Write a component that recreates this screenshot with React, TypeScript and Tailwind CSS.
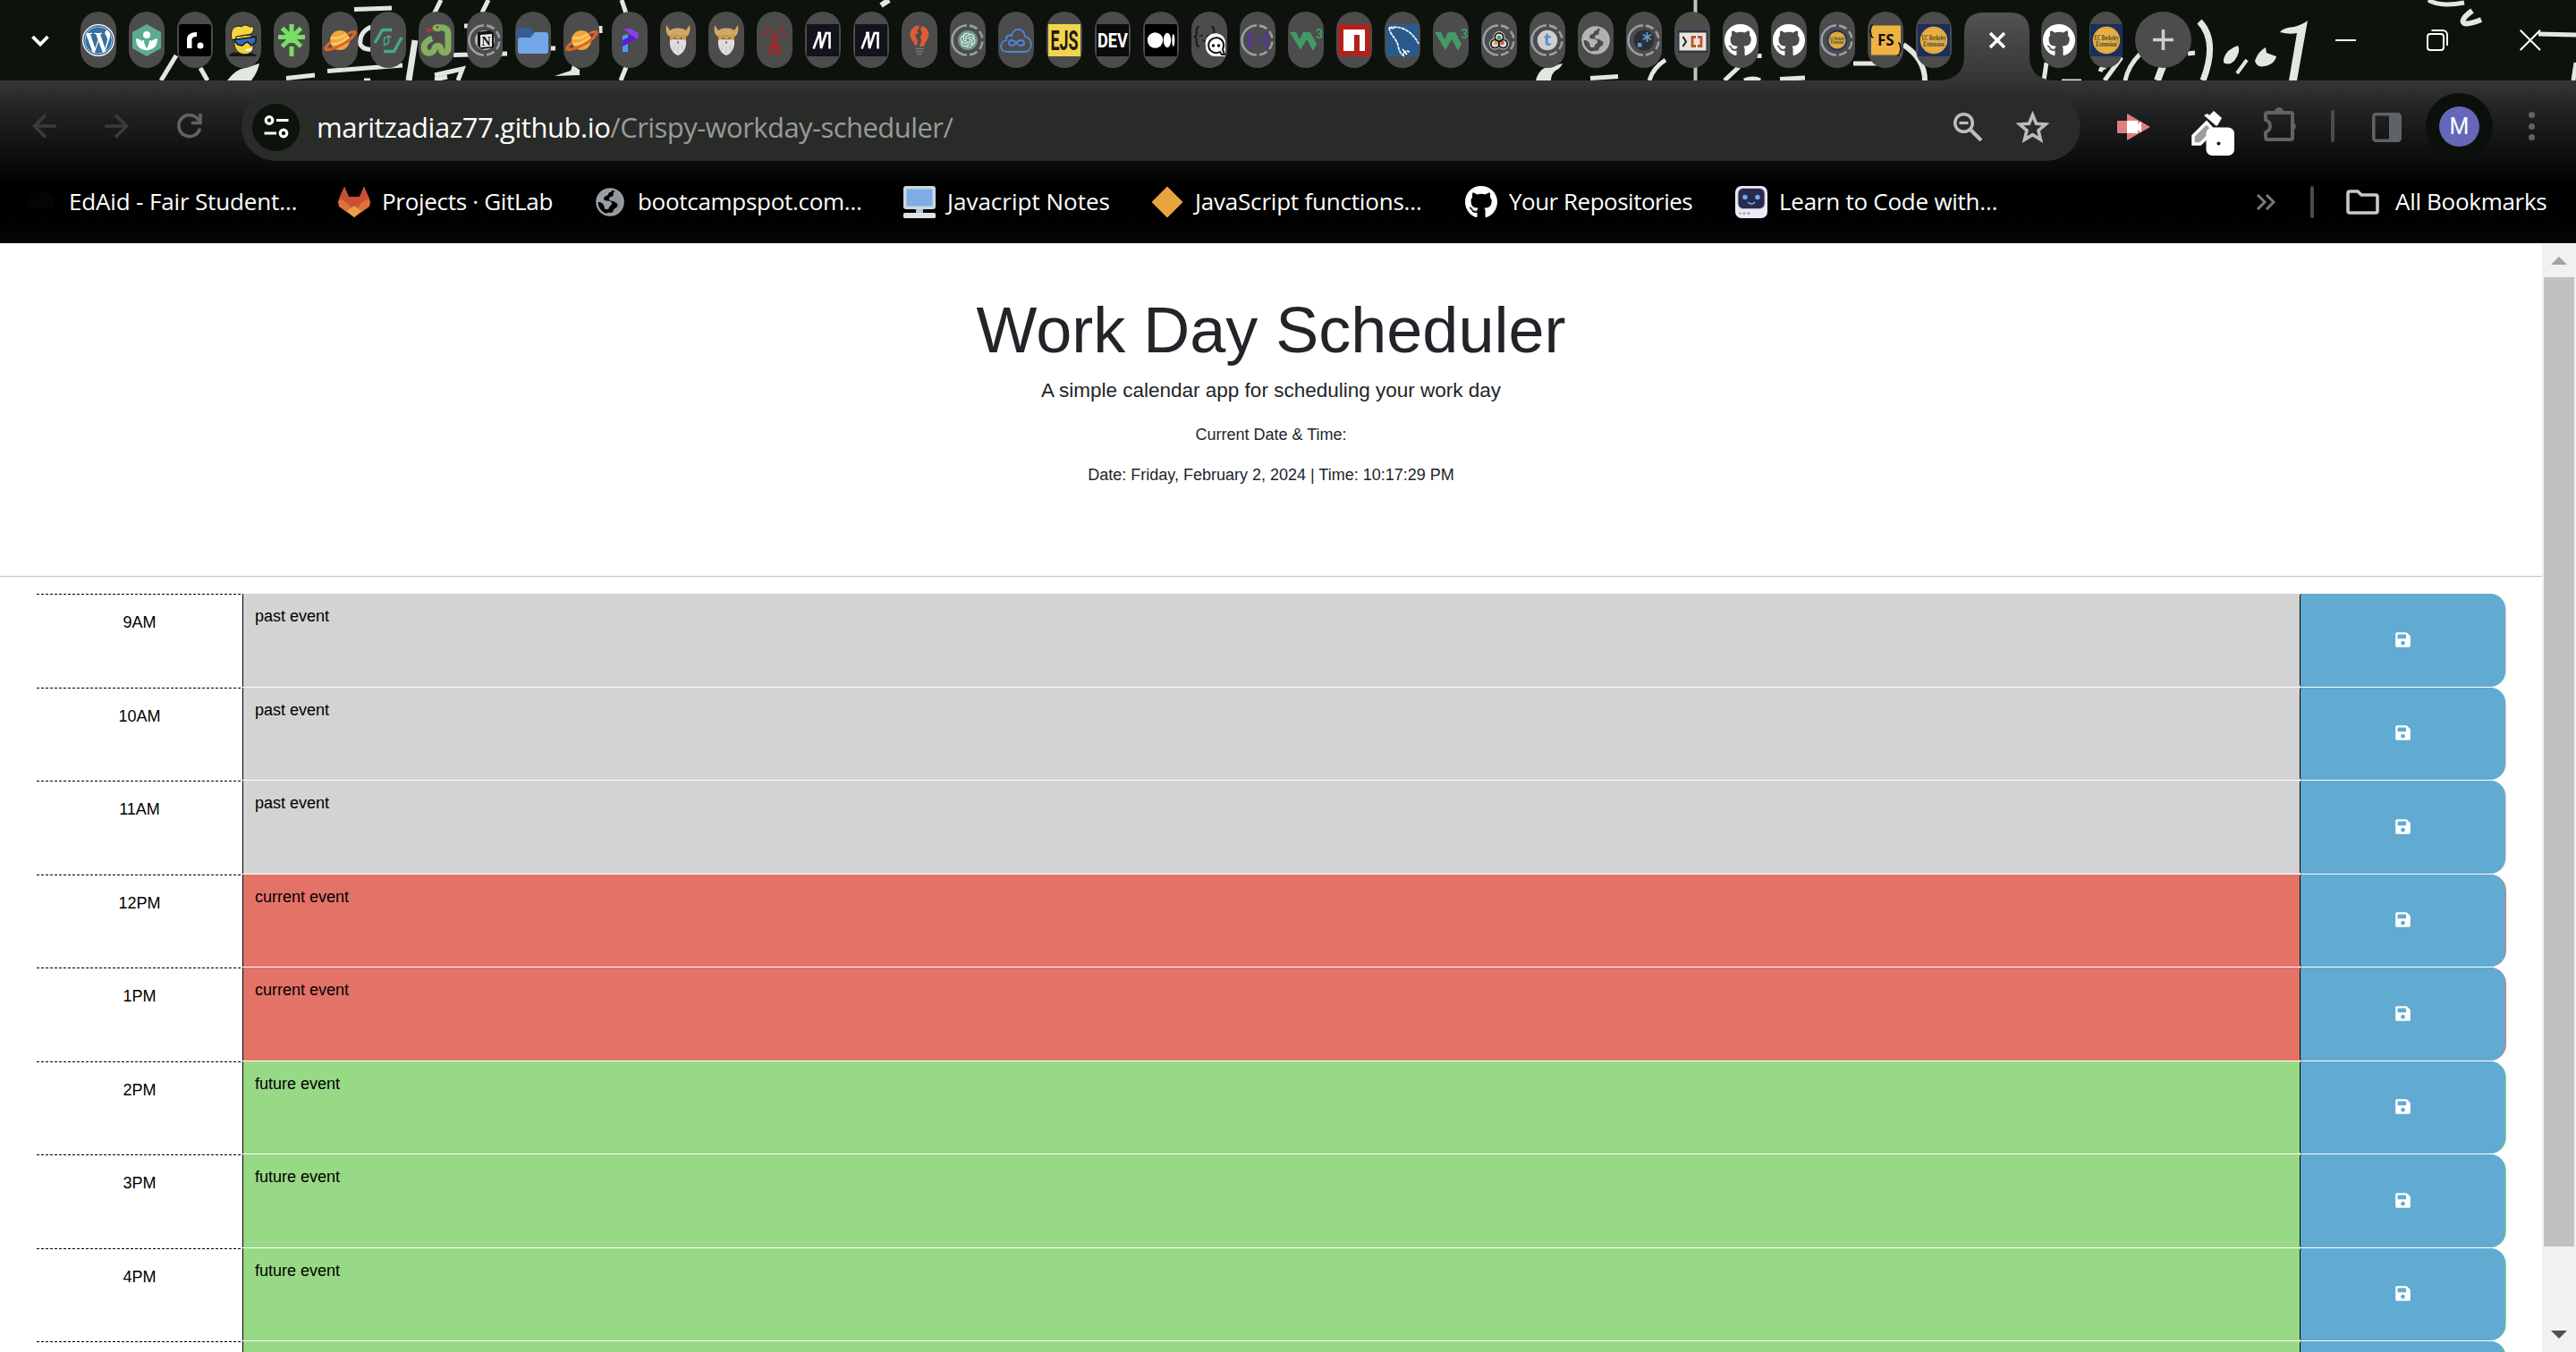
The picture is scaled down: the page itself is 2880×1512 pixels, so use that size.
import React from "react";
import { FaGithub, FaSave, FaWordpressSimple } from "react-icons/fa";
import { SiOpenai } from "react-icons/si";

const UI = "font-['Open_Sans','Noto_Sans',sans-serif]";

function Ico({ children, box = "0 0 36 36" }: { children: React.ReactNode; box?: string }) {
  return (
    <svg viewBox={box} className="block h-9 w-9 shrink-0 overflow-visible" fill="none">
      {children}
    </svg>
  );
}

/* Ring shown round the favicon of a sleeping tab */
function Sleep({ children }: { children: React.ReactNode }) {
  return (
    <Ico>
      <path d="M17 1.5A16.5 16.5 0 0 0 17 34.5" stroke="#9a9fa6" strokeWidth="2.6" />
      <path
        d="M20 1.6A16.5 16.5 0 0 1 28.5 5.3M31 8A16.5 16.5 0 0 1 34.3 15.5M34.4 19.5A16.5 16.5 0 0 1 31.2 28M28.5 30.7A16.5 16.5 0 0 1 20 34.4"
        stroke="#9a9fa6"
        strokeWidth="2.6"
      />
      {children}
    </Ico>
  );
}

const WordPress = () => (
  <Ico>
    <circle cx="18" cy="18" r="18" fill="#fff" />
    <circle cx="18" cy="18" r="16.4" fill="#37709f" />
    <FaWordpressSimple x="1" y="1" size={34} color="#fff" />
    <circle cx="18" cy="18" r="16" stroke="#37709f" strokeWidth="1.4" />
  </Ico>
);

const Hex = () => (
  <Ico>
    <path d="M18 0 34 9v18L18 36 2 27V9z" fill="#5cad90" />
    <circle cx="18" cy="12" r="4" fill="#fff" />
    <path d="M18 29c-2-7-5-12-12-13 0 8 4 13 12 13zM18 29c2-7 5-12 12-13 0 8-4 13-12 13z" fill="#fff" />
    <path d="M18 29C15 25 14 21 14 18M18 29c3-4 4-8 4-11" stroke="#fff" strokeWidth="2" />
  </Ico>
);

const Roadmap = () => (
  <Ico>
    <rect width="36" height="36" rx="3" fill="#000" />
    <path d="M9 27V17c0-5 4-8 11-8v5c-4 0-5.5 1.500-5.5 4v9z" fill="#fff" />
    <circle cx="24" cy="24" r="3.500" fill="#fff" />
  </Ico>
);

const Guy = () => (
  <Ico>
    <path d="M2 36c1-4 5-5 9-4h12c5 0 9 1 10 4z" fill="#161616" />
    <path d="M8 14l17-2 5 3-1 13c-3 7-12 7-17 3-4-4-5-10-4-17z" fill="#f0cf3d" stroke="#1b1b1b" strokeWidth="1" />
    <path d="M5 8C6 3 12 1 16 3c3-3 7-2 9 0 4-1 6 2 4 5-1 3-5 4-8 4L10 14l-2 7C4 17 4 12 5 8z" fill="#f5d63f" stroke="#1b1b1b" strokeWidth="1" />
    <path d="M7 17.500l25-3.500v6l-5 4-4-4-3 1-3 3-5-1z" fill="#2d6cc0" stroke="#111" strokeWidth="1.400" />
    <path d="M21 29l7-1" stroke="#fff" strokeWidth="2" />
  </Ico>
);

const Linktree = () => (
  <Ico>
    <path d="M18 0v21M3 14.500h30M7.500 4.500 28.500 25M28.500 4.500 7.500 25M18 25v11" stroke="#78de62" strokeWidth="5" />
  </Ico>
);

const Planet = () => (
  <Ico>
    <path d="M8 20C-3 29 1 31 14 26S39 9 34 8.500c-2 0-5 1-7 2" stroke="#d9662c" strokeWidth="3" />
    <circle cx="18" cy="18" r="11" fill="#f1a53c" />
    <path d="M8 15c6 2 12 0 17-4M9 22c7 1 14-3 19-8" stroke="#f8cb66" strokeWidth="2.500" />
    <path d="M2 26c1 4 12 1 20-4 8-4 13-10 12-13" stroke="#d9662c" strokeWidth="3" />
  </Ico>
);

const GreenArrows = () => (
  <Ico>
    <path d="M3 21 11.500 6.500H22M33 15 24.500 30.500H13" stroke="#44ac7e" strokeWidth="3.400" />
    <path d="M13.500 16l5-2.500v7.500l-5 2.500zM18.500 21V13.500l3 1.500" stroke="#44ac7e" strokeWidth="1.400" />
  </Ico>
);

const Snake = () => (
  <Ico>
    <path
      d="M18 4.500C23 3 31 3 31 11v16c0 6-7 6.500-8 1-.8-5-6.500-5-7.500 0C14 34 4 34 4 26c0-5 4-8 9-10"
      stroke="#83b05e"
      strokeWidth="7"
    />
    <path d="M13 13.500c0 3-2 5-5 6l3-5z" fill="#83b05e" />
    <path d="M7 4.500l4 2.200L7.500 9M10 6.800h5" stroke="#cf2f3f" strokeWidth="1.800" />
    <ellipse cx="19" cy="4.200" rx="5.500" ry="4" fill="#83b05e" />
    <circle cx="19" cy="3.200" r="1" fill="#222" />
  </Ico>
);

const Notion = () => (
  <Sleep>
    <circle cx="18" cy="18" r="11" fill="#b7b7b7" />
    <path d="M10 9l14-2 4 3v16l-14 2-4-4z" fill="#111" />
    <path d="M13 12l13-1v14l-13 1z" fill="#e9e9e9" />
    <text x="19.500" y="23.500" textAnchor="middle" fontSize="14" fontWeight="700" fontFamily="Liberation Serif" fill="#111">N</text>
  </Sleep>
);

const Folder = () => (
  <Ico>
    <path d="M2 4h12l5 5h9a3 3 0 0 1 3 3v8H0V6a2 2 0 0 1 2-2z" fill="#385c94" />
    <path d="M4 15h11l5-6h12a3 3 0 0 1 3 3v18a3 3 0 0 1-3 3H4a3 3 0 0 1-3-3V18a3 3 0 0 1 3-3z" fill="#72a6e8" />
  </Ico>
);

const PMark = () => (
  <Ico>
    <path d="M10 13l6-2v20h-6z" fill="#4d9cf0" />
    <path d="M10 25V18l17-9v7z" fill="#5a20cf" />
    <path d="M11 5h8l9 5-1 7-9-6z" fill="#8b3ff0" />
  </Ico>
);

const Viking = () => (
  <Ico>
    <path d="M5 1l4 6c3-2 5-2.500 9-2.500s6 .5 9 2.500l4-6c1 7 0 11-4 13H9C5 12 4 8 5 1z" fill="#d2a964" />
    <path d="M9 12h18v6H9z" fill="#c99c55" />
    <path d="M9 18l5-1 4 1 4-1 5 1c1 8-3 15-9 17-6-2-10-9-9-17z" fill="#dedede" />
    <circle cx="14.500" cy="16" r="1" fill="#444" />
    <circle cx="21.500" cy="16" r="1" fill="#444" />
    <circle cx="18" cy="20.500" r=".9" fill="#333" />
    <path d="M18 24v9M14 23l-1 6M22 23l1 6" stroke="#c2c2c2" />
  </Ico>
);

const Tower = () => (
  <Ico>
    <g stroke="#b02323" strokeWidth="1.900">
      <circle cx="18" cy="14" r="3" />
      <path d="M16.500 17 11 34M19.500 17 25 34M15 22l7 5M21 22l-7 5M13 28l10 5M23 28l-10 5M12.500 8 8 2M23.500 8 28 2M10 13l-6-3M26 13l6-3" />
    </g>
  </Ico>
);

const MBlock = () => (
  <Ico>
    <rect width="36" height="36" fill="#13131b" />
    <path d="M7.500 27.500 14.500 9 16 27 22 9M25.500 9v18.500" stroke="#fff" strokeWidth="2.600" />
    <path d="M12 10h4M21 10h5.500" stroke="#fff" strokeWidth="2.400" />
  </Ico>
);

const Bulb = () => (
  <Ico>
    <path d="M18 1c6 0 10.500 4 10.500 10 0 5-4 8-5.500 14H13C11.500 19 7.500 16 7.500 11 7.500 5 12 1 18 1z" fill="#4c4c4c" />
    <path d="M8 8c2-4 6-7 9-6.500l1 3-3 3 2 3-4 1 1 3 2 4-1 5h-2C11 19 7.500 16 7.500 11zM21 2c4 1 7 5 7.500 9 0 5-4 8-5.500 14h-5l2-7-1-4 2-4-2-4z" fill="#e05a35" />
    <path d="M13 27.500h10M14 30.500h8M15.500 33.500h5" stroke="#777" strokeWidth="1.700" />
  </Ico>
);

const ChatGPT = () => (
  <Sleep>
    <circle cx="18" cy="18" r="11" fill="#6c9c8b" />
    <SiOpenai x="9.5" y="9.5" size={17} color="#eee" />
  </Sleep>
);

const Cloud = () => (
  <Ico>
    <path d="M8 31C-1 31-1 19 7 18 6 13 11 11 13 13 15 3 27 4 28 14c8 1 10 15 0 17z" stroke="#4e86df" strokeWidth="1.800" />
    <path d="M18 21c-3-4-8-4-8 0s5 4 8 0 9-4 9 0-6 4-9 0z" stroke="#4e86df" strokeWidth="1.800" />
  </Ico>
);

const EJS = () => (
  <Ico>
    <rect width="36" height="36" fill="#f3d44c" />
    <text x="18" y="29" textAnchor="middle" fontSize="31" textLength="31" lengthAdjust="spacingAndGlyphs" fontWeight="700" fontFamily="Roboto" fill="#1d1b10">EJS</text>
  </Ico>
);

const DEV = () => (
  <Ico>
    <rect width="36" height="36" fill="#0b0b0d" />
    <text x="18" y="26" textAnchor="middle" fontSize="22" textLength="34" lengthAdjust="spacingAndGlyphs" fontWeight="700" fontFamily="Roboto" fill="#fff">DEV</text>
  </Ico>
);

const Medium = () => (
  <Ico>
    <rect width="36" height="36" rx="2" fill="#000" />
    <circle cx="11.500" cy="18" r="8.700" fill="#fff" />
    <ellipse cx="25" cy="18" rx="4.200" ry="8.200" fill="#fff" />
    <ellipse cx="31.800" cy="18" rx="1.500" ry="7" fill="#fff" />
  </Ico>
);

const Braces = () => (
  <Ico>
    <path d="M7 3C1 3 6 12 2 14c4 2-1 11 5 11M20 3c6 0 1 9 5 11" stroke="#1e1e1e" strokeWidth="2.200" />
    <path d="M7 14c1-2 3-2 4 0M15 14c1-2 3-2 4 0M10 17c2 3 5 3 7 0" stroke="#1e1e1e" strokeWidth="1.400" />
    <path d="M14 24a11 11 0 0 1 22-5v17H25a11 11 0 0 1-11-12z" fill="#fff" />
    <path d="M32 34l-2-3a8.500 8.500 0 1 1 3-3l2 6z" stroke="#111" strokeWidth="2" />
    <circle cx="22.500" cy="24" r="1.800" fill="#111" />
    <circle cx="28.500" cy="24" r="1.800" fill="#111" />
  </Ico>
);

const PurpleBraces = () => (
  <Sleep>
    <path d="M11 9c-4 0-1 6-4 9 3 3 0 9 4 9M25 9c4 0 1 6 4 9-3 3 0 9-4 9" stroke="#5b2fb8" strokeWidth="2" />
    <path d="M12 17c1-2 3-2 4 0M20 17c1-2 3-2 4 0M15 21c2 3 4 3 6 0" stroke="#5b2fb8" strokeWidth="1.400" />
  </Sleep>
);

const W3 = () => (
  <Ico>
    <path d="M0 9h7l4 8 4-8h8l7 13-4 8-7-13-7 12z" fill="#439a67" />
    <text x="33" y="16" textAnchor="middle" fontSize="14" fontWeight="700" fontFamily="Roboto" fill="#439a67">3</text>
  </Ico>
);

const Npm = () => (
  <Ico>
    <rect width="36" height="36" fill="#b1221d" />
    <path d="M6 6h24v24h-6V12h-6v18H6z" fill="#fff" />
  </Ico>
);

const MySQL = () => (
  <Ico>
    <rect width="36" height="36" fill="#2a5a8c" />
    <path d="M3 4c14-3 26 4 33 18M3 4c1 8 9 13 10 20 1 5 2 8 6 11 0-4 2-6 7-4M18 28l5 6M4 4l5 1" stroke="#fff" strokeWidth="1.700" strokeDasharray="4 .7" />
  </Ico>
);

const Triad = () => (
  <Sleep>
    <g fill="#ddd" stroke="#ddd" strokeWidth="4">
      <circle cx="18" cy="14.500" r="4.500" />
      <circle cx="13.500" cy="22" r="4.500" />
      <circle cx="22.500" cy="22" r="4.500" />
    </g>
    <g stroke="#1c1c1c" strokeWidth="1.800">
      <circle cx="18" cy="14.500" r="4.700" />
      <circle cx="13.500" cy="22" r="4.700" />
      <circle cx="22.500" cy="22" r="4.700" />
    </g>
    <circle cx="18" cy="15" r="2.200" fill="#3f9a4a" />
    <circle cx="14.500" cy="21" r="2.200" fill="#e0a52d" />
    <circle cx="21.500" cy="21" r="2.200" fill="#d4553b" />
  </Sleep>
);

const TMark = () => (
  <Sleep>
    <circle cx="18" cy="18" r="11.200" fill="#cfcfcf" />
    <text x="18" y="24" textAnchor="middle" fontSize="20" fontWeight="700" fontFamily="Open Sans" fill="#5b90cc">t</text>
  </Sleep>
);

/* Default globe favicon */
function Globe({ color }: { color: string }) {
  return (
    <Ico>
      <circle cx="18" cy="18" r="14.600" stroke={color} strokeWidth="2.400" />
      <path d="M3 18c0-9 7-15 16-15 2 1 1 3.500-.5 4-3 0-2 3-3.500 3.500-2 .5-4 2-4 4 0 1.500 2 2 4 2 3 0 5 1 5 3.500 0 2-3 2-3 4s-2 2-3.500 2-2-1-2-3-2-4-4.500-5z" fill={color} />
      <path d="M25 5c5 3 8 8 8 13 0 8-6 15-15 15-2 0-3-1-4-2.500 2-1.500 5 0 7-1.500 1-1 .5-3 2.500-4s3-2 3-4-2-1.500-3-3-3-1-5-1.500-2-3-.5-4 3 0 3.500-2-1-3.500 3.500-5.500z" fill={color} opacity=".95" />
    </Ico>
  );
}

const Regex = () => (
  <Sleep>
    <circle cx="18" cy="18" r="11.500" fill="#2c2f34" />
    <rect x="11" y="21" width="4.500" height="4.500" fill="#5b9bd5" />
    <path d="M21.500 9v11M16.800 11.800l9.400 5.400M26.200 11.800l-9.400 5.400" stroke="#5b9bd5" strokeWidth="1.800" />
  </Sleep>
);

const Bracket = () => (
  <Ico>
    <rect x="2" y="7" width="33" height="25" fill="#2c3347" />
    <rect x="3.500" y="9.500" width="30" height="20" fill="#e6e6de" />
    <path d="M7.500 14l3.500 5.500L7.500 25" stroke="#222" strokeWidth="2" />
    <path d="M22 14.500h-4v10h4M24 14.500h4v10h-4" stroke="#c5512a" strokeWidth="2.800" />
  </Ico>
);

const GitHub = () => (
  <Ico>
    <FaGithub x="-.6" y="-.6" size={37.2} color="#fff" />
  </Ico>
);

const Seal = ({ size = 18 }: { size?: number }) => (
  <>
    <text x="18" y="17.500" textAnchor="middle" fontSize={size * 0.5} textLength={size * 1.5} lengthAdjust="spacingAndGlyphs" fontFamily="Liberation Serif" fontWeight="700" fill="#3c4a3a">UC Berkeley</text>
    <text x="18" y={17.5 + size * 0.4} textAnchor="middle" fontSize={size * 0.5} textLength={size * 1.3} lengthAdjust="spacingAndGlyphs" fontFamily="Liberation Serif" fontWeight="700" fill="#3c4a3a">Extension</text>
  </>
);

const UCBSleep = () => (
  <Sleep>
    <circle cx="18" cy="18" r="11.500" fill="#1f3560" />
    <circle cx="18" cy="18" r="9.600" fill="#dfa93c" />
    <Seal size={11} />
  </Sleep>
);

const UCB = () => (
  <Ico>
    <rect width="36" height="36" fill="#1a2f5c" />
    <circle cx="18" cy="18" r="15.200" fill="#e9ae40" />
    <circle cx="18" cy="18" r="13.800" stroke="#c9963b" strokeWidth=".5" />
    <Seal size={18} />
  </Ico>
);

const FS = () => (
  <Ico>
    <rect x="2" y="1.500" width="33" height="33" fill="#efb342" />
    <path d="M4 1C0 1 3 6 .5 8c2.500 2 0 7 4 7M32 21c4 0 1 5 3.500 6.500C33 29 36 35 31 35" stroke="#111" strokeWidth="1.500" />
    <text x="18.300" y="24" textAnchor="middle" fontSize="17" fontWeight="700" fontFamily="Open Sans" fill="#111">FS</text>
  </Ico>
);

const GreyGlobe = () => <Globe color="#b4b4b4" />;

const tabs = [
  WordPress, Hex, Roadmap, Guy, Linktree, Planet, GreenArrows, Snake, Notion, Folder, Planet, PMark, Viking,
  Viking, Tower, MBlock, MBlock, Bulb, ChatGPT, Cloud, EJS, DEV, Medium, Braces, PurpleBraces, W3, Npm, MySQL,
  W3, Triad, TMark, GreyGlobe, Regex, Bracket, GitHub, GitHub, UCBSleep, FS, UCB,
];

/* Chalk writing of the browser theme, behind the tabs */
function Chalk() {
  return (
    <svg className="absolute inset-0 h-[90px] w-[2880px]" viewBox="0 0 2880 90" fill="none" stroke="#e3e7e1" strokeWidth="5">
      <path d="M396 10.500 438 9M493 0l-14 28M197 62l-17 28M224 76l8 14M320 87.500l32-3.500M366 79.500l84-6.500M415 30q-14 6-12 20 4 6 12 5M486 89l14-3" />
      <path d="M464 45 457 90" strokeWidth="7" />
      <path d="M254 90q10-13 20-14l16-5q-2 10-9 19z" fill="#e3e7e1" stroke="none" />
      <path d="M546 0l-7 14M695 0l5 15M700 75l-6 15M507 61.500l60-1.500M486 84l31-7-5 13M616 54h5M519 29h4M671 29v8M407 90h7" />
      <path d="M620 85l18-6 2-6 8 5v6z" fill="#e3e7e1" stroke="none" />
      <path d="M994 0 985 6" strokeWidth="6" />
      <path d="M1895.500 0V90" stroke="#bfc3bd" strokeWidth="4" />
      <path d="M1717 90q4-14 14-15l16-4q-2 5-8 8-5 4-5 11z" fill="#e3e7e1" stroke="none" />
      <path d="M1778 87.500l31-2M1862 67q-14 9-18 23M1928 90l16-15M1967 60v5M1950 90q10-4 18 0M1990 88.500l28-1.500M2072 71h30" />
      <path d="M2128 50q24 16 24 40" strokeWidth="6" />
      <path d="M2288 70l-3 20M2372 64l-19 26M2393 60q-14 14-17 30M2348 80q2-6 7-5" />
      <path d="M2305 89.500h22" strokeWidth="2" />
      <path d="M2418 74l-6 16" strokeWidth="8" />
      <path d="M2459 24q21 22 4 66" strokeWidth="7" />
      <g fill="#e3e7e1" stroke="none">
        <path d="M2486 66q3-11 16-15 4 6-4 17-6 6-12 2z" />
        <path d="M2521 68q4-11 12-15l1 6 11 4q-2 9-13 11-9 2-11-6z" />
        <path d="M2549 36q3-5 16-6 10-3 15-7l-12 67h-9l9-53q-9 2-19-1z" />
      </g>
      <path d="M2512 67l-11 15" strokeWidth="4" />
      <path d="M2715 0q12 8 40 3" />
      <path d="M2764 12q-14 10-9 14 4 2 19-4" strokeWidth="6" />
      <path d="M2838 38l42 1M2446 60l8-1M2880 70l-3 20" />
    </svg>
  );
}

function Pill({ icon: Icon, className = "w-10" }: { icon: React.ComponentType; className?: string }) {
  return (
    <div className={`flex h-[63px] shrink-0 items-center justify-center rounded-[20px] bg-[#4c4c4c] ${className}`}>
      <Icon />
    </div>
  );
}

function TabStrip() {
  return (
    <div className="relative flex h-[90px] overflow-hidden bg-[#0d120d]">
      <Chalk />
      <div className="relative mt-[13px] flex h-[63px] w-full items-center">
        <div className="flex w-[90px] shrink-0 justify-center">
          <svg className="h-5 w-6" viewBox="0 0 24 20" fill="none" stroke="#fff" strokeWidth="3.800">
            <path d="M3.500 6 12 14.500 20.500 6" />
          </svg>
        </div>
        <div className="flex gap-[14px]">
          {tabs.map((icon, i) => (
            <Pill key={i} icon={icon} />
          ))}
        </div>
        <div className="relative ml-[14px] mr-[13px] flex h-[63px] w-[73px] shrink-0 items-center justify-center">
          <svg className="absolute -left-[27px] top-0 h-[77px] w-[127px]" viewBox="0 0 127 77">
            <defs>
              <linearGradient id="active" x1="0" y1="0" x2="0" y2="1">
                <stop offset="0" stopColor="#525252" />
                <stop offset="1" stopColor="#353535" />
              </linearGradient>
            </defs>
            <path d="M0 77q27-2 27-27V23Q27 1 49 1h29q22 0 22 22v27q0 25 27 27z" fill="url(#active)" />
          </svg>
          <svg className="relative h-[18px] w-[18px]" viewBox="0 0 18 18" stroke="#fff" strokeWidth="3.600">
            <path d="M1 1 17 17M17 1 1 17" />
          </svg>
        </div>
        <Pill icon={GitHub} />
        <Pill icon={UCB} className="ml-[14px] w-[37px]" />
        <div className="ml-[14px] flex h-[63px] w-[63px] shrink-0 items-center justify-center rounded-full bg-[#4c4c4c]">
          <svg className="h-[23px] w-[23px]" viewBox="0 0 23 23" stroke="#cfcfcf" strokeWidth="3.500">
            <path d="M11.500 0v23M0 11.500h23" />
          </svg>
        </div>
        <div className="ml-[161px] flex items-center text-white">
          <div className="h-[2px] w-[23px] bg-white" />
          <svg className="ml-[79px] h-[24px] w-[24px]" viewBox="0 0 24 24" fill="none" stroke="#fff" strokeWidth="2">
            <rect x="1" y="5" width="18" height="18" rx="3" />
            <path d="M5.500 1H18a5 5 0 0 1 5 5v12" />
          </svg>
          <svg className="ml-[80px] h-[24px] w-[24px]" viewBox="0 0 24 24" stroke="#fff" strokeWidth="2">
            <path d="M.7.7 23 23M23 .7.7 23" />
          </svg>
        </div>
      </div>
    </div>
  );
}

function Toolbar() {
  return (
    <div className="flex h-[102px] items-center">
      <svg className="ml-9 h-7 w-7" viewBox="0 0 28 28" fill="none" stroke="#393a3c" strokeWidth="3.600">
        <path d="M27 14H3M15 1.500 2.500 14 15 26.500" />
      </svg>
      <svg className="ml-[53px] h-7 w-7" viewBox="0 0 28 28" fill="none" stroke="#393a3c" strokeWidth="3.600">
        <path d="M0 14h24M12 1.500 24.500 14 12 26.500" />
      </svg>
      <svg className="ml-[53px] h-7 w-7" viewBox="0 0 28 28" fill="none" stroke="#5f6267" strokeWidth="3.600">
        <path d="M25.500 16.500A12 12 0 1 1 24.500 8M26 0v10.500H16" />
      </svg>
      <div className="ml-11 mt-[2px] flex h-[76px] w-[2056px] items-center rounded-full bg-[#292b29] pl-3">
        <div className="flex h-[53px] w-[53px] items-center justify-center rounded-full bg-[#0d120d]">
          <svg className="h-[26px] w-7" viewBox="0 0 28 26" fill="none" stroke="#fff" strokeWidth="3.200">
            <circle cx="6" cy="5.500" r="3.800" />
            <circle cx="22" cy="20" r="3.800" />
            <path d="M14 5.500h13.500M.5 20H14" />
          </svg>
        </div>
        <div className={`${UI} ml-[19px] w-[1830px] whitespace-nowrap text-[31px] leading-[40px] tracking-[-0.55px] text-[#979b97]`}>
          <span className="tracking-[-0.45px] text-white">maritzadiaz77.github.io</span>/Crispy-workday-scheduler/
        </div>
        <svg className="h-8 w-8 shrink-0" viewBox="0 0 32 32" fill="none" stroke="#bcbcbc">
          <circle cx="11.500" cy="11.500" r="9.800" strokeWidth="3.600" />
          <path d="M19 19l12 12" strokeWidth="4.200" />
          <path d="M6.500 11.500h10" strokeWidth="3.200" />
        </svg>
        <svg className="ml-[38px] h-[36px] w-[37px] shrink-0" viewBox="0 0 37 36" fill="none" stroke="#bcbcbc" strokeWidth="3.600">
          <path d="M18.500 4.500l4 9.700 10.500.8-8 6.900 2.500 10.200-9-5.500-9 5.500L12 21.900 4 15l10.500-.8z" />
        </svg>
      </div>
      <svg className="ml-[41px] mt-[2px] h-[30px] w-[37px]" viewBox="0 0 37 30">
        <rect y="8" width="14" height="14" rx="1" fill="#e07f80" />
        <path d="M11 0 37 15 11 30z" fill="#e07f80" />
        <rect x="11" y="8" width="12" height="14" fill="#fff" />
        <path d="M21 13l6-4v12l-6-4z" fill="#fff" />
      </svg>
      <svg className="ml-[45px] mt-[16px] h-[51px] w-[50px]" viewBox="0 0 50 51">
        <path d="M18 13 3 28v9h8l15-15z" fill="#9d9d9d" stroke="#fff" strokeWidth="3.500" />
        <path d="M26 0l9 8-4 7-2 2-14-12 4-2 2 2z" fill="#fff" />
        <rect x="17.500" y="18.500" width="31.500" height="31.500" rx="7" fill="#fff" />
        <circle cx="31.500" cy="36.500" r="2" fill="#111" />
      </svg>
      <svg className="-mt-1 ml-[32px] h-[38px] w-[38px]" viewBox="0 0 38 38" fill="none" stroke="#5f6267" strokeWidth="4">
        <path d="M4 6h26a2 2 0 0 1 2 2v26a2 2 0 0 1-2 2H4a2 2 0 0 1-2-2v-6q5-2 5-7t-5-7V8a2 2 0 0 1 2-2z" />
        <path d="M12 5a5 5 0 0 1 10 0zM33 17a5 5 0 0 1 0 9z" fill="#5f6267" stroke="none" />
      </svg>
      <div className="ml-[37px] h-9 w-1 rounded bg-[#4b4b4d]" />
      <svg className="ml-[42px] mt-[2px] h-[33px] w-[33px]" viewBox="0 0 33 33">
        <rect x="1.800" y="1.800" width="29.400" height="29.400" rx="2.500" fill="none" stroke="#5f6267" strokeWidth="3.600" />
        <rect x="19" y="2" width="13" height="29" fill="#5f6267" />
      </svg>
      <div className="ml-[27px] flex h-[75px] w-[75px] items-center justify-center rounded-full bg-[#0c100c]">
        <div className="flex h-[45px] w-[45px] items-center justify-center rounded-full bg-[#6568b8] font-['Roboto',sans-serif] text-[25px] leading-none text-white">
          M
        </div>
      </div>
      <div className="ml-10 flex flex-col gap-[5.500px]">
        <div className="h-[7px] w-[7px] rounded-full bg-[#5f6267]" />
        <div className="h-[7px] w-[7px] rounded-full bg-[#5f6267]" />
        <div className="h-[7px] w-[7px] rounded-full bg-[#5f6267]" />
      </div>
    </div>
  );
}

const GitLab = () => (
  <Ico>
    <path d="M7 1 0 18l1 5 17 12 17-12 1-5-7-17-5 12H12z" fill="#e0713b" />
    <path d="M7 .5 1 14l9 5 8 9 8-9 9-5-6-13.500-5 11.500H12z" fill="#c94f36" />
    <path d="M0 18l2-4 8 5 8 12-7-3zM36 18l-2-4-8 5-8 12 7-3z" fill="#e0713b" />
    <path d="M10 28l8-6 8 6-8 7z" fill="#e5a346" />
  </Ico>
);

const Monitor = () => (
  <Ico>
    <rect x="14" y="25" width="8" height="5" fill="#b7c2cc" />
    <rect x="0" y="0" width="36" height="26" rx="3" fill="#cdd6de" />
    <rect x="3.500" y="3.500" width="29" height="19" fill="#7dade6" />
    <rect x="0" y="30" width="36" height="6" rx="1.500" fill="#dfe3e8" />
  </Ico>
);

const Diamond = () => (
  <Ico>
    <path d="M18 .5 35.500 18 18 35.500.5 18z" fill="#e8a53d" />
  </Ico>
);

const Robot = () => (
  <Ico>
    <rect width="36" height="36" rx="7" fill="#edeaf6" />
    <rect x="3" y="2.500" width="30" height="23" rx="6" fill="#2a2a4d" stroke="#b9b3d8" />
    <circle cx="11" cy="12.500" r="2.700" fill="#61b3ee" />
    <circle cx="25" cy="12.500" r="2.700" fill="#61b3ee" />
    <path d="M14 18q4 4 8 0" stroke="#61b3ee" strokeWidth="1.500" />
    <circle cx="5.500" cy="30.500" r="1.200" fill="#7ccf70" />
    <circle cx="10" cy="30.500" r="1.600" fill="#a5a0cc" />
    <circle cx="15" cy="30.500" r="1.600" fill="#a5a0cc" />
  </Ico>
);

const BookmarkGlobe = () => <Globe color="#9a9ea5" />;
const Blank = () => (
  <Ico>
    <path d="M4 12 18 5l14 7v14H4z" fill="#040404" />
  </Ico>
);

const bookmarks = [
  { icon: Blank, label: "EdAid - Fair Student…", width: "w-[350px]", text: "tracking-[-0.15px]" },
  { icon: GitLab, label: "Projects · GitLab", width: "w-[286px]", text: "tracking-[-0.3px]" },
  { icon: BookmarkGlobe, label: "bootcampspot.com…", width: "w-[346px]", text: "tracking-[-0.3px]" },
  { icon: Monitor, label: "Javacript Notes", width: "w-[277px]", text: "tracking-[0px]" },
  { icon: Diamond, label: "JavaScript functions…", width: "w-[351px]", text: "tracking-[-0.2px]" },
  { icon: GitHub, label: "Your Repositories", width: "w-[302px]", text: "tracking-[-0.5px]" },
  { icon: Robot, label: "Learn to Code with…", width: "w-[300px]", text: "tracking-[-0.25px]" },
];

function Bookmarks() {
  return (
    <div className={`${UI} flex h-[79px] items-center whitespace-nowrap pb-[11px] pl-7 text-[26px] leading-9 text-white`}>
      {bookmarks.map((b) => (
        <div key={b.label} className={`flex shrink-0 items-center gap-[13px] ${b.width}`}>
          <b.icon />
          <span className={`-mt-[2px] ${b.text}`}>{b.label}</span>
        </div>
      ))}
      <svg className="ml-[283px] h-[18px] w-[21px]" viewBox="0 0 21 18" fill="none" stroke="#77797d" strokeWidth="3">
        <path d="M1 1l8 8-8 8M11 1l8 8-8 8" />
      </svg>
      <div className="ml-[39px] h-9 w-1 rounded bg-[#4b4b4d]" />
      <svg className="ml-9 h-[28px] w-[37px]" viewBox="0 0 37 28" fill="none" stroke="#c8c8c8" strokeWidth="3.600">
        <path d="M4 2h9l4 4h16a2 2 0 0 1 2 2v16a2 2 0 0 1-2 2H4a2 2 0 0 1-2-2V4a2 2 0 0 1 2-2z" />
      </svg>
      <span className="-mt-[2px] ml-[18px] tracking-[-0.3px]">All Bookmarks</span>
    </div>
  );
}

const PAST = "bg-[#d3d3d3]";
const PRESENT = "bg-[#e37367]";
const FUTURE = "bg-[#98d985]";

const rows = [
  { hour: "9AM", text: "past event", color: PAST, height: "h-[105px]" },
  { hour: "10AM", text: "past event", color: PAST, height: "h-[104px]" },
  { hour: "11AM", text: "past event", color: PAST, height: "h-[105px]" },
  { hour: "12PM", text: "current event", color: PRESENT, height: "h-[104px]" },
  { hour: "1PM", text: "current event", color: PRESENT, height: "h-[105px]" },
  { hour: "2PM", text: "future event", color: FUTURE, height: "h-[104px]" },
  { hour: "3PM", text: "future event", color: FUTURE, height: "h-[105px]" },
  { hour: "4PM", text: "future event", color: FUTURE, height: "h-[104px]" },
  { hour: "", text: "", color: FUTURE, height: "h-[105px]" },
];

function Schedule() {
  return (
    <div className="ml-[41px] mt-[19px] w-[2761px] text-[18px] leading-[27px] text-black">
      {rows.map((r, i) => (
        <div key={i} className={`flex ${r.height}`}>
          <div className="w-[230px] shrink-0 bg-[repeating-linear-gradient(to_right,#000_0px,#000_3px,#fff_3px,#fff_5px)] bg-[length:100%_1px] bg-no-repeat pt-[19px] text-center">
            {r.hour}
          </div>
          <div className={`mb-px flex grow rounded-r-[18px] border-l border-black ${r.color}`}>
            <div className="grow pl-[13px] pt-[12px]">{r.text}</div>
            <div className="mr-px flex w-[230px] items-center justify-center rounded-l-[3px] rounded-r-[17px] border-l border-black bg-[#61abd2] pb-[2px]">
              <FaSave className="h-[19px] w-[17px] text-white" />
            </div>
          </div>
        </div>
      ))}
    </div>
  );
}

export default function App() {
  return (
    <div className="flex h-[1512px] w-[2880px] flex-col overflow-hidden bg-white">
      <div className="shrink-0">
        <TabStrip />
        <div className="h-[182px] border-b border-[#1d181b] bg-[linear-gradient(to_bottom,#353535_0px,#1d1d1d_45px,#0c0c0c_90px,#000_120px,#000_150px,#060606_182px)]">
          <Toolbar />
          <Bookmarks />
        </div>
      </div>
      <div className="flex min-h-0 grow font-['Liberation_Sans',Arial,sans-serif]">
        <div className="w-[2842px] overflow-hidden">
          <header className="flex h-[373px] flex-col items-center border-b border-[#c4c4c4] pt-[54px] text-[#212529]">
            <h1 className="text-[72px] leading-[86px]">Work Day Scheduler</h1>
            <p className="mt-[8px] text-[22.5px] leading-[34px]">A simple calendar app for scheduling your work day</p>
            <p className="mt-[19px] text-[18px] leading-[27px]">Current Date &amp; Time:</p>
            <p className="mt-[18px] text-[18px] leading-[27px]">Date: Friday, February 2, 2024 | Time: 10:17:29 PM</p>
          </header>
          <Schedule />
        </div>
        <div className="flex w-[38px] flex-col items-center bg-[#f1f1f1]">
          <svg className="mt-[15px] h-[9px] w-[18px]" viewBox="0 0 18 9">
            <path d="M0 9 9 0l9 9z" fill="#a3a3a3" />
          </svg>
          <div className="mt-[14px] h-[1084px] w-[34px] bg-[#c1c1c1]" />
          <svg className="mt-[94px] h-[9px] w-[18px]" viewBox="0 0 18 9">
            <path d="M0 0h18L9 9z" fill="#505050" />
          </svg>
        </div>
      </div>
    </div>
  );
}
